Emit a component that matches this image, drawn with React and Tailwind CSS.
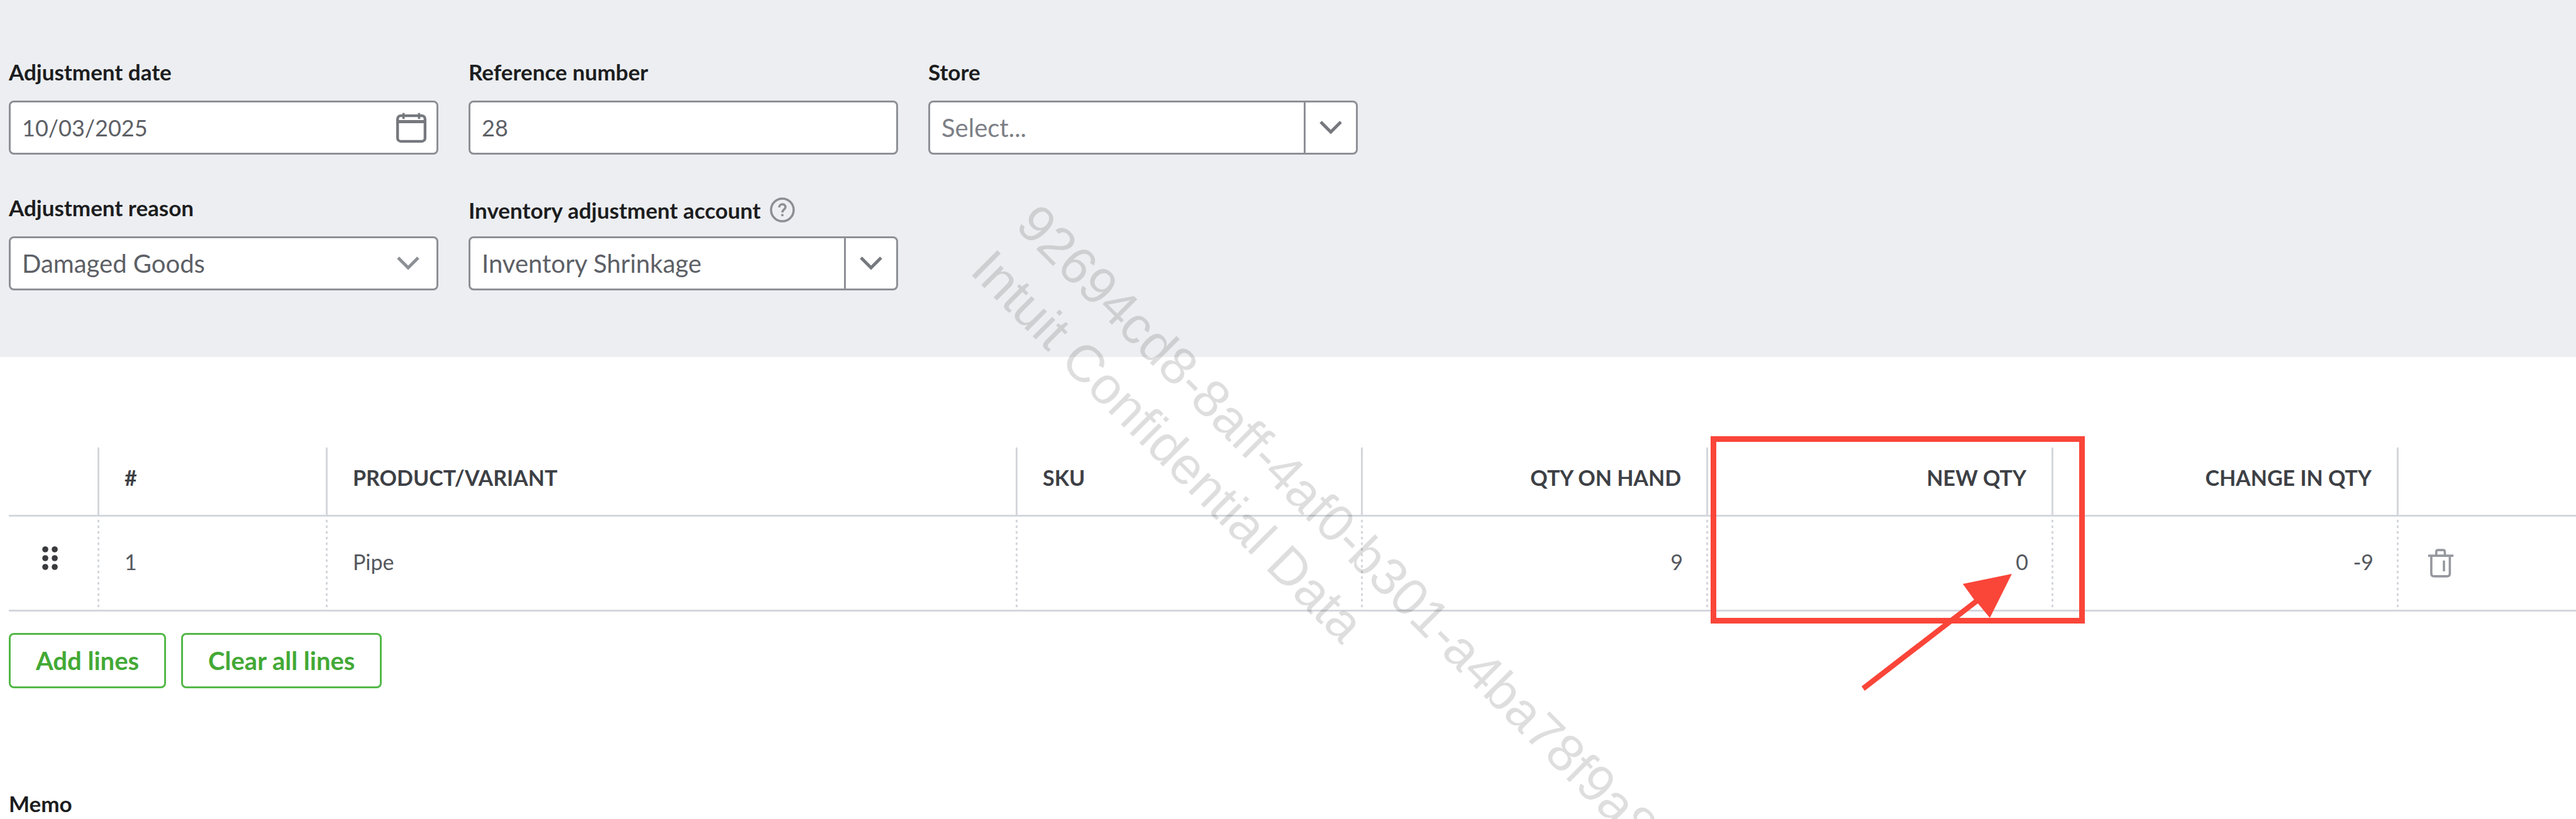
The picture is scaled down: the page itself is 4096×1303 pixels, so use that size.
import React from "react";

const boxClass =
  "flex h-[86px] w-full items-stretch overflow-hidden rounded-lg border-[3px] border-[#8d9096] bg-white";

const columns = [
  { key: "drag", label: "", width: "w-[144px]" },
  { key: "num", label: "#", width: "w-[363px]" },
  { key: "product", label: "PRODUCT/VARIANT", width: "" },
  { key: "sku", label: "SKU", width: "w-[549px]" },
  { key: "onhand", label: "QTY ON HAND", width: "w-[549px]", right: true },
  { key: "newqty", label: "NEW QTY", width: "w-[549px]", right: true },
  { key: "change", label: "CHANGE IN QTY", width: "w-[549px]", right: true },
  { key: "remove", label: "", width: "w-[282px]", last: true },
];

function Chevron({ className }) {
  return (
    <svg viewBox="0 0 36 22" className={`h-[22px] w-9 ${className}`} fill="none" stroke="currentColor" strokeWidth="5" aria-hidden="true">
      <path d="M2 2 L18 18 L34 2" />
    </svg>
  );
}

function CalendarIcon() {
  return (
    <svg viewBox="0 0 66 66" className="size-12 text-[#75787d]" fill="none" stroke="currentColor" strokeWidth="6" aria-hidden="true">
      <rect x="3" y="7" width="60" height="56" rx="7" />
      <path d="M4 20 H62" strokeWidth="7" />
      <path d="M16 1 V14 M50 1 V14" strokeWidth="5" />
    </svg>
  );
}

function HelpIcon() {
  return (
    <svg viewBox="0 0 40 40" className="size-10 text-[#8b8e92]" fill="none" stroke="currentColor" strokeWidth="3.5" aria-hidden="true">
      <circle cx="20" cy="20" r="18" />
      <path d="M15 16 C15 9.5 25 9.5 25 15.5 C25 19 20 19.5 20 24" />
      <path d="M20 26.5 V30" />
    </svg>
  );
}

function TrashIcon() {
  return (
    <svg viewBox="0 0 58 64" className="h-[46px] w-[42px] text-[#95989e]" fill="none" stroke="currentColor" strokeWidth="5" aria-hidden="true">
      <path d="M1 15.5 H57" />
      <path d="M19 15 V7 Q19 3 23 3 H34 Q38 3 38 7 V15" />
      <path d="M8 16 V55 Q8 61 14 61 H43 Q49 61 49 55 V16" />
      <path d="M36 26 V50" />
    </svg>
  );
}

function DragIcon() {
  const dots = [];
  for (const cy of [5, 19, 33]) for (const cx of [5, 20]) dots.push([cx, cy]);
  return (
    <svg viewBox="0 0 25 38" className="h-[38px] w-[25px]" fill="#393a3d" aria-hidden="true">
      {dots.map(([cx, cy]) => (
        <circle key={`${cx}-${cy}`} cx={cx} cy={cy} r="4.8" />
      ))}
    </svg>
  );
}

function Label({ id, children }) {
  return (
    <label htmlFor={id} className="text-[35px] leading-10 font-bold text-[#1c1d20]">
      {children}
    </label>
  );
}

function Combo({ id, value, placeholder, name }) {
  return (
    <div className={boxClass}>
      <input
        id={id}
        type="text"
        defaultValue={value}
        placeholder={placeholder}
        className="min-w-0 flex-1 px-[18px] text-[40px] text-[#5d6066] outline-none placeholder:text-[#7d8087]"
      />
      <button type="button" aria-label={`Open ${name} list`} className="flex w-[83px] items-center justify-center border-l-[3px] border-[#8d9096]">
        <Chevron className="text-[#75787d]" />
      </button>
    </div>
  );
}

function Callout() {
  return (
    <svg viewBox="0 0 595 406" className="pointer-events-none absolute -top-[128px] left-1 h-[406px] w-[595px] max-w-none text-[#fa4539]" aria-hidden="true">
      <rect x="4.5" y="4.5" width="586" height="289" fill="none" stroke="currentColor" strokeWidth="9" />
      <polygon points="479,219 401,235 419,260 240,398 245,405 425,266 444,289" fill="currentColor" />
    </svg>
  );
}

const cellRule =
  "bg-[repeating-linear-gradient(to_bottom,transparent_0_5px,#d4d7dc_5px_9px)] bg-[length:3px_100%] bg-right bg-no-repeat";
const cell = "h-[151px] border-b-[3px] border-[#d4d7dc] align-middle text-[34px] leading-10 text-[#55585e]";

export default function App() {
  return (
    <div className="relative min-h-screen overflow-hidden bg-white font-['Lato','Open_Sans',sans-serif]">
      <section className="flex flex-col gap-16 bg-[#eceef1] pt-[94px] pb-[106px] pl-[14px]">
        <div className="flex items-end gap-12">
          <div className="flex w-[683px] flex-col gap-[26px]">
            <Label id="date">Adjustment date</Label>
            <div className={boxClass}>
              <input id="date" type="text" defaultValue="10/03/2025" className="min-w-0 flex-1 px-[18px] text-4xl text-[#5d6066] outline-none" />
              <button type="button" aria-label="Open calendar" className="mr-4 flex items-center">
                <CalendarIcon />
              </button>
            </div>
          </div>
          <div className="flex w-[683px] flex-col gap-[26px]">
            <Label id="ref">Reference number</Label>
            <div className={boxClass}>
              <input id="ref" type="text" defaultValue="28" className="min-w-0 flex-1 px-[18px] text-4xl text-[#5d6066] outline-none" />
            </div>
          </div>
          <div className="flex w-[683px] flex-col gap-[26px]">
            <Label id="store">Store</Label>
            <Combo id="store" placeholder="Select..." name="store" />
          </div>
        </div>
        <div className="flex items-end gap-12">
          <div className="flex w-[683px] flex-col gap-[26px]">
            <Label id="reason">Adjustment reason</Label>
            <div className="relative">
              <select id="reason" className="h-[86px] w-full appearance-none rounded-lg border-[3px] border-[#8d9096] bg-white px-[18px] text-[40px] text-[#5d6066] outline-none">
                <option>Damaged Goods</option>
              </select>
              <Chevron className="pointer-events-none absolute top-8 right-[30px] text-[#8d9096]" />
            </div>
          </div>
          <div className="flex w-[683px] flex-col gap-[22px]">
            <div className="flex items-center gap-3.5">
              <Label id="account">Inventory adjustment account</Label>
              <button type="button" aria-label="Help">
                <HelpIcon />
              </button>
            </div>
            <Combo id="account" value="Inventory Shrinkage" name="account" />
          </div>
        </div>
      </section>

      <main className="pt-36 pl-[14px]">
        <table className="w-full table-fixed border-separate border-spacing-0">
          <thead>
            <tr>
              {columns.map((c) => (
                <th
                  key={c.key}
                  scope="col"
                  className={`${c.width} h-[110px] border-b-[3px] border-[#d4d7dc] pt-7 align-top text-[34px] leading-10 font-bold text-[#3d4045] ${
                    c.last ? "" : "border-r-[3px]"
                  } ${c.right ? "pr-10 text-right" : "pl-10 text-left"}`}
                >
                  {c.label}
                </th>
              ))}
            </tr>
          </thead>
          <tbody>
            <tr>
              <td className={`${cell} ${cellRule} pb-4 pl-[53px]`}>
                <button type="button" aria-label="Reorder line" className="block">
                  <DragIcon />
                </button>
              </td>
              <td className={`${cell} ${cellRule} pb-1 pl-10`}>1</td>
              <td className={`${cell} ${cellRule} pb-1 pl-10`}>Pipe</td>
              <td className={`${cell} ${cellRule}`}></td>
              <td className={`${cell} ${cellRule} pr-10 pb-1 text-right`}>9</td>
              <td className={`${cell} ${cellRule} relative pr-10 pb-1 text-right`}>
                0
                <Callout />
              </td>
              <td className={`${cell} ${cellRule} pr-10 pb-1 text-right`}>-9</td>
              <td className={`${cell} pl-[46px]`}>
                <button type="button" aria-label="Delete line" className="block">
                  <TrashIcon />
                </button>
              </td>
            </tr>
          </tbody>
        </table>

        <div className="mt-[34px] flex gap-6">
          <button type="button" className="h-[88px] rounded-lg border-[3px] border-[#53b848] px-10 text-[40px] leading-[48px] font-bold text-[#43a936]">
            Add lines
          </button>
          <button type="button" className="h-[88px] rounded-lg border-[3px] border-[#53b848] px-10 text-[40px] leading-[48px] font-bold text-[#43a936]">
            Clear all lines
          </button>
        </div>

        <h2 className="mt-[163px] text-[35px] leading-10 font-bold text-[#1c1d20]">Memo</h2>
      </main>

      <div className="pointer-events-none absolute inset-0 overflow-hidden">
        <div className="absolute top-[305px] left-[1668px] origin-top-left rotate-45 font-['Liberation_Sans',Arial,sans-serif] text-[83px] leading-[102px] whitespace-nowrap text-black/13">
          <p>92694cd8-8aff-4af0-b301-a4ba78f9a8</p>
          <p>Intuit Confidential Data</p>
        </div>
      </div>
    </div>
  );
}
